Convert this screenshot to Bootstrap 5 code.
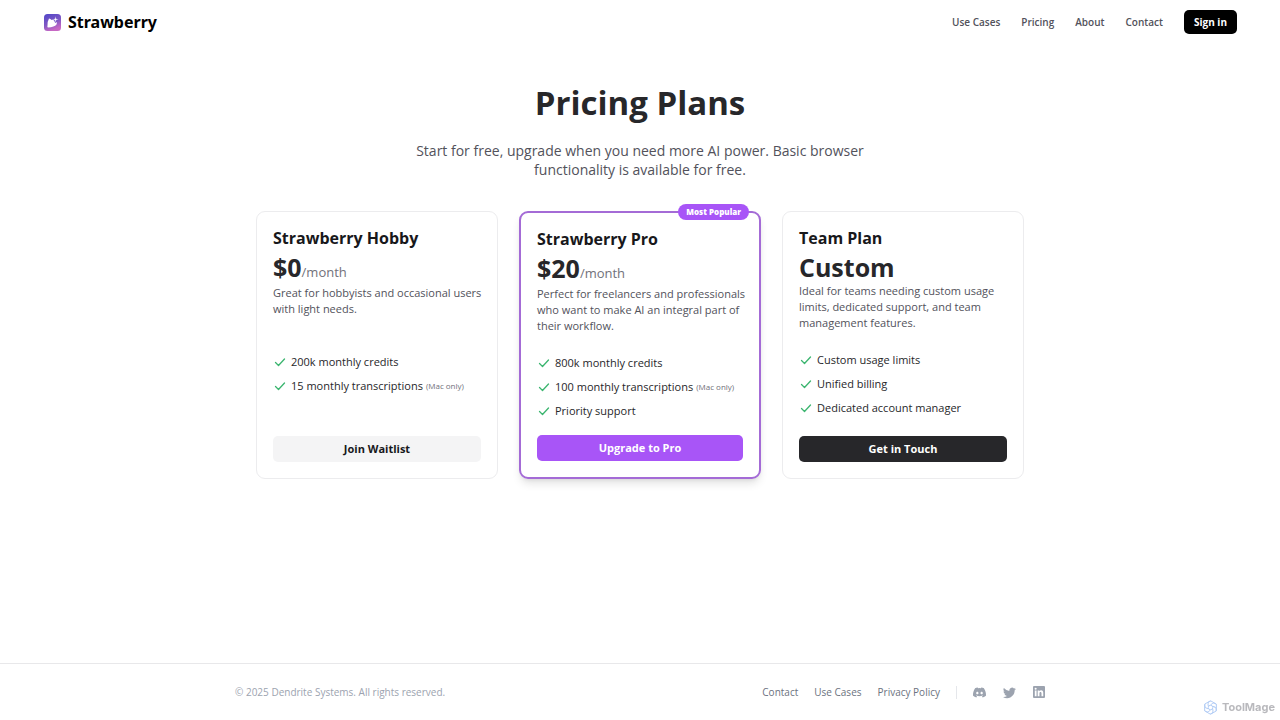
<!DOCTYPE html>
<html lang="en">
<head>
<meta charset="utf-8">
<meta name="viewport" content="width=device-width, initial-scale=1">
<title>Strawberry – Pricing Plans</title>
<link href="https://cdn.jsdelivr.net/npm/bootstrap@5.3.0/dist/css/bootstrap.min.css" rel="stylesheet">
<style>
  body { font-family: "Open Sans", "Noto Sans", sans-serif; font-size: 11px; line-height: 16px; color: #27272a; background: #fff; }
  a { text-decoration: none; }
  .site-header { padding: 10px 43px 11px 44px; }
  .brand { font-family: "Noto Sans", sans-serif; font-size: 16px; line-height: 24px; font-weight: 700; color: #000; gap: 7px; }
  .site-nav { gap: 21px; font-size: 10px; font-weight: 600; }
  .site-nav a { color: #52525b; }
  .btn-signin { --bs-btn-bg: #000; --bs-btn-color: #fff; --bs-btn-hover-bg: #27272a; --bs-btn-hover-color: #fff;
    font-size: 10px; line-height: 16px; font-weight: 700; padding: 4px 10px; border: 0; border-radius: 5px; }
  .intro { padding-top: 38px; margin-bottom: 32px; }
  .intro h1 { font-size: 33px; line-height: 40px; font-weight: 700; margin-bottom: 18px; color: #27272a; }
  .intro p { font-size: 14px; line-height: 19px; max-width: 448px; color: #52525b; }
  .plans { max-width: 768px; width: 100%; display: grid; grid-template-columns: repeat(3, 1fr); gap: 21px; }
  .plan { border: 1px solid #ececee; border-radius: 9px; padding: 16px; }
  .plan-featured { border: 2px solid #a46bd6; box-shadow: 0 6px 10px -2px rgba(0,0,0,.12), 0 2px 4px -2px rgba(0,0,0,.1); }
  .plan h2 { font-size: 16px; line-height: 21px; font-weight: 700; margin-bottom: 2px; color: #18181b; }
  .price { font-size: 25px; line-height: 32px; font-weight: 700; }
  .price span { font-size: 13px; line-height: 26px; font-weight: 400; color: #71717a; }
  .about-plan { color: #52525b; min-height: 48px; margin: 0 -8px 21px 0; }
  .perks { gap: 8px; margin-bottom: 16px; }
  .perks li { gap: 4px; }
  .perks small { font-size: 8px; color: #71717a; margin-left: -1px; }
  .btn-plan { --bs-btn-color: #fff; --bs-btn-hover-color: #fff; font-size: 11px; line-height: 16px; font-weight: 700; padding: 5px 12px; border: 0; border-radius: 5px; }
  .btn-wait { --bs-btn-bg: #f4f4f5; --bs-btn-color: #18181b; --bs-btn-hover-bg: #e4e4e7; --bs-btn-hover-color: #18181b; }
  .btn-pro { --bs-btn-bg: #a855f7; --bs-btn-hover-bg: #9333ea; }
  .btn-team { --bs-btn-bg: #27272a; --bs-btn-hover-bg: #3f3f46; }
  .popular { top: -9px; right: 10px; font-size: 8px; line-height: 16px; font-weight: 800; background: #a855f7; color: #fff; padding: 0 8px; }
  .site-footer { border-top: 1px solid #e8e8ea; font-size: 10px; color: #9ca3af; }
  .footer-inner { max-width: 810px; min-height: 56px; }
  .footer-links a { color: #6b7280; }
  .footer-links .socials a { color: #9ca3af; }
  .socials { gap: 17px; border-left: 1px solid #e5e7eb; padding-left: 16px; height: 13px; }
  .watermark { right: 5px; bottom: 5px; gap: 4px; font: 700 11px/16px Inter, sans-serif; color: #b9b9bd; }
</style>
</head>
<body class="d-flex flex-column min-vh-100">
<header class="site-header d-flex justify-content-between align-items-center">
  <a href="#" class="brand d-flex align-items-center">
    <svg width="17" height="17" viewBox="0 0 34 34" aria-hidden="true">
      <defs><linearGradient id="brandFill" x1="0" y1="0" x2="0.4" y2="1"><stop offset="0" stop-color="#4f46c8"/><stop offset=".6" stop-color="#8058c4"/><stop offset="1" stop-color="#c768c4"/></linearGradient></defs>
      <rect width="34" height="34" rx="7" fill="url(#brandFill)"/>
      <path d="M10 9 Q13 9 15 12 L19 10 L21 15 L26 17 L25 21 Q21 26 8 27 Q6 27 7 23 Q7 14 10 9Z" fill="#fff"/>
      <path d="M23 4 L24.500 9.500 L30 11 L24.500 12.500 L23 18 L21.500 12.500 L17 11 L21.500 9.500Z" fill="#fff" stroke="#6a50c6" stroke-width="1"/>
    </svg>
    Strawberry
  </a>
  <nav class="site-nav d-flex align-items-center" aria-label="Main">
    <a href="#">Use Cases</a><a href="#">Pricing</a><a href="#">About</a><a href="#">Contact</a>
    <button type="button" class="btn btn-signin">Sign in</button>
  </nav>
</header>

<main class="flex-grow-1 d-flex flex-column align-items-center">
  <div class="intro text-center">
    <h1>Pricing Plans</h1>
    <p class="mb-0 mx-auto">Start for free, upgrade when you need more AI power. Basic browser functionality is available for free.</p>
  </div>
  <svg class="d-none" aria-hidden="true"><symbol id="tick" viewBox="0 0 14 14"><path d="M2.500 7.500 L5.500 10.500 L11.500 4" fill="none" stroke="#3bb56f" stroke-width="1.300" stroke-linecap="round" stroke-linejoin="round"/></symbol></svg>
  <section class="plans" aria-label="Plans">
    <article class="plan d-flex flex-column">
      <h2>Strawberry Hobby</h2>
      <div class="price">$0<span>/month</span></div>
      <p class="about-plan">Great for hobbyists and occasional users with light needs.</p>
      <ul class="perks list-unstyled d-flex flex-column">
        <li class="d-flex align-items-center"><svg width="14" height="14"><use href="#tick"/></svg>200k monthly credits</li>
        <li class="d-flex align-items-center"><svg width="14" height="14"><use href="#tick"/></svg>15 monthly transcriptions <small>(Mac only)</small></li>
      </ul>
      <button type="button" class="btn btn-plan btn-wait w-100 mt-auto">Join Waitlist</button>
    </article>
    <article class="plan plan-featured d-flex flex-column position-relative">
      <span class="popular rounded-pill position-absolute">Most Popular</span>
      <h2>Strawberry Pro</h2>
      <div class="price">$20<span>/month</span></div>
      <p class="about-plan">Perfect for freelancers and professionals who want to make AI an integral part of their workflow.</p>
      <ul class="perks list-unstyled d-flex flex-column">
        <li class="d-flex align-items-center"><svg width="14" height="14"><use href="#tick"/></svg>800k monthly credits</li>
        <li class="d-flex align-items-center"><svg width="14" height="14"><use href="#tick"/></svg>100 monthly transcriptions <small>(Mac only)</small></li>
        <li class="d-flex align-items-center"><svg width="14" height="14"><use href="#tick"/></svg>Priority support</li>
      </ul>
      <button type="button" class="btn btn-plan btn-pro w-100 mt-auto">Upgrade to Pro</button>
    </article>
    <article class="plan d-flex flex-column">
      <h2>Team Plan</h2>
      <div class="price">Custom</div>
      <p class="about-plan">Ideal for teams needing custom usage limits, dedicated support, and team management features.</p>
      <ul class="perks list-unstyled d-flex flex-column">
        <li class="d-flex align-items-center"><svg width="14" height="14"><use href="#tick"/></svg>Custom usage limits</li>
        <li class="d-flex align-items-center"><svg width="14" height="14"><use href="#tick"/></svg>Unified billing</li>
        <li class="d-flex align-items-center"><svg width="14" height="14"><use href="#tick"/></svg>Dedicated account manager</li>
      </ul>
      <button type="button" class="btn btn-plan btn-team w-100 mt-auto">Get in Touch</button>
    </article>
  </section>
</main>

<footer class="site-footer">
  <div class="footer-inner mx-auto d-flex justify-content-between align-items-center">
    <span>© 2025 Dendrite Systems. All rights reserved.</span>
    <div class="footer-links d-flex align-items-center gap-3">
      <a href="#">Contact</a><a href="#">Use Cases</a><a href="#">Privacy Policy</a>
      <div class="socials d-flex align-items-center">
        <a href="#" class="d-flex" aria-label="Discord"><svg width="13" height="13" viewBox="0 0 16 16" fill="currentColor"><path d="M13.545 2.907a13.227 13.227 0 0 0-3.257-1.011.05.05 0 0 0-.052.025c-.141.25-.297.577-.406.833a12.19 12.19 0 0 0-3.658 0 8.258 8.258 0 0 0-.412-.833.051.051 0 0 0-.052-.025c-1.125.194-2.22.534-3.257 1.011a.041.041 0 0 0-.021.018C.356 6.024-.213 9.047.066 12.032c.001.014.01.028.021.037a13.276 13.276 0 0 0 3.995 2.02.05.05 0 0 0 .056-.019c.308-.42.582-.863.818-1.329a.05.05 0 0 0-.01-.059.051.051 0 0 0-.018-.011 8.875 8.875 0 0 1-1.248-.595.05.05 0 0 1-.02-.066.051.051 0 0 1 .015-.019c.084-.063.168-.129.248-.195a.05.05 0 0 1 .051-.007c2.619 1.196 5.454 1.196 8.041 0a.052.052 0 0 1 .053.007c.08.066.164.132.248.195a.051.051 0 0 1-.004.085 8.254 8.254 0 0 1-1.249.594.05.05 0 0 0-.03.03.052.052 0 0 0 .003.041c.24.465.515.909.817 1.329a.05.05 0 0 0 .056.019 13.235 13.235 0 0 0 4.001-2.02.049.049 0 0 0 .021-.037c.334-3.451-.559-6.449-2.366-9.106a.034.034 0 0 0-.02-.019Zm-8.198 7.307c-.789 0-1.438-.724-1.438-1.612 0-.889.637-1.613 1.438-1.613.807 0 1.45.73 1.438 1.613 0 .888-.637 1.612-1.438 1.612Zm5.316 0c-.788 0-1.438-.724-1.438-1.612 0-.889.637-1.613 1.438-1.613.807 0 1.451.73 1.438 1.613 0 .888-.631 1.612-1.438 1.612Z"/></svg></a>
        <a href="#" class="d-flex" aria-label="Twitter"><svg width="13" height="13" viewBox="0 0 16 16" fill="currentColor"><path d="M5.026 15c6.038 0 9.341-5.003 9.341-9.334 0-.14 0-.282-.006-.422A6.685 6.685 0 0 0 16 3.542a6.658 6.658 0 0 1-1.889.518 3.301 3.301 0 0 0 1.447-1.817 6.533 6.533 0 0 1-2.087.793A3.286 3.286 0 0 0 7.875 6.03a9.325 9.325 0 0 1-6.767-3.429 3.289 3.289 0 0 0 1.018 4.382A3.323 3.323 0 0 1 .64 6.575v.045a3.288 3.288 0 0 0 2.632 3.218 3.203 3.203 0 0 1-.865.115 3.23 3.23 0 0 1-.614-.057 3.283 3.283 0 0 0 3.067 2.277A6.588 6.588 0 0 1 .78 13.58a6.32 6.32 0 0 1-.78-.045A9.344 9.344 0 0 0 5.026 15z"/></svg></a>
        <a href="#" class="d-flex" aria-label="LinkedIn"><svg width="12" height="12" viewBox="0 0 24 24" fill="currentColor"><path fill-rule="evenodd" d="M2 0H22Q24 0 24 2V22Q24 24 22 24H2Q0 24 0 22V2Q0 0 2 0ZM3.600 9V20.400H7.100V9ZM5.300 3.400A2 2 0 1 0 5.300 7.500A2 2 0 1 0 5.300 3.400ZM9.400 9V20.400H12.900V14.800C12.900 11 17 11.200 17 14.500V20.400H20.500V13.500C20.500 7.800 14.600 7.600 12.800 10.500V9Z"/></svg></a>
      </div>
    </div>
  </div>
</footer>
<div class="watermark position-fixed d-flex align-items-center">
  <svg width="15" height="15" viewBox="0 0 30 30" fill="none" stroke="#b3cdf5" stroke-width="2" aria-hidden="true">
    <path d="M15 1.500 L26.700 8.200 V21.800 L15 28.500 L3.300 21.800 V8.200Z" stroke-linejoin="round"/>
    <g id="petals"><path d="M15 10 Q22 3 26 9"/><path d="M15 10 Q22 3 26 9" transform="rotate(60 15 15)"/><path d="M15 10 Q22 3 26 9" transform="rotate(120 15 15)"/><path d="M15 10 Q22 3 26 9" transform="rotate(180 15 15)"/><path d="M15 10 Q22 3 26 9" transform="rotate(240 15 15)"/><path d="M15 10 Q22 3 26 9" transform="rotate(300 15 15)"/></g>
    <circle cx="15" cy="15" r="4.500"/>
  </svg>
  ToolMage
</div>
<script src="https://cdn.jsdelivr.net/npm/bootstrap@5.3.0/dist/js/bootstrap.bundle.min.js"></script>
</body>
</html>
